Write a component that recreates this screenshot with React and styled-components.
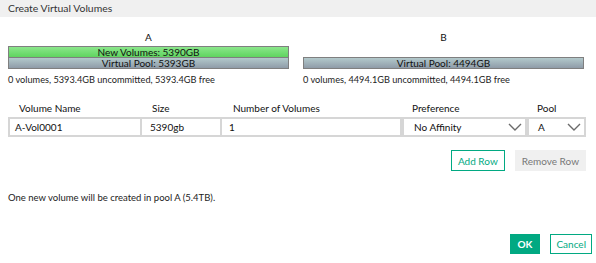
import React from "react";
import styled, { createGlobalStyle } from "styled-components";

const Global = createGlobalStyle`
  html, body { margin: 0; padding: 0; background: #fff; }
  body { font-family: Lato, "Noto Sans", sans-serif; color: #222; }
  * { box-sizing: border-box; }
`;

const Dialog = styled.div`
  width: 596px;
  height: 263px;
  background: #fff;
  display: flex;
  flex-direction: column;
`;

const Header = styled.div`
  height: 17px;
  background: #f0f0f0;
  padding-left: 8px;
  font-size: 10.4px;
  line-height: 17px;
  color: #333;
`;

const Pools = styled.div`
  display: grid;
  grid-template-columns: 281px 281px;
  column-gap: 14px;
  padding-left: 8px;
  margin-top: 13px;
`;

const Pool = styled.div`
  display: flex;
  flex-direction: column;
`;

const PoolLabel = styled.div`
  text-align: center;
  font-size: 10px;
  line-height: 14px;
  color: #111;
`;

const Bars = styled.div`
  margin-top: 2px;
  height: 23px;
  display: flex;
  flex-direction: column;
  justify-content: flex-end;
`;

const Bar = styled.div`
  height: ${(p) => (p.$joined ? "11px" : "12px")};
  border: 1px solid #7f7f7f;
  border-top: ${(p) => (p.$joined ? "none" : "1px solid #7f7f7f")};
  background: ${(p) =>
    p.$kind === "new"
      ? "linear-gradient(#8be68b, #5fd45f)"
      : "linear-gradient(#b2c9cb, #8f9ca8)"};
  font-size: 10px;
  line-height: 10px;
  text-align: center;
  color: #111;
  white-space: nowrap;
  overflow: hidden;
`;

const Stats = styled.div`
  margin-top: 5px;
  font-size: 9.2px;
  line-height: 12px;
  color: #222;
`;

const Grid = styled.div`
  display: grid;
  grid-template-columns: 134px 80px 180px 125px 59px;
  padding-left: 8px;
  margin-top: 15px;
`;

const Th = styled.div`
  font-size: 10px;
  line-height: 14px;
  padding-left: ${(p) => p.$pad || 11}px;
  color: #111;
  margin-bottom: 2px;
`;

const Input = styled.div`
  height: 20px;
  border: 2px solid #d6d6d6;
  border-left-width: ${(p) => (p.$first ? "2px" : "0")};
  font-size: 10px;
  line-height: 16px;
  padding-left: ${(p) => p.$pad || 5}px;
  color: #111;
`;

const Select = styled(Input)`
  display: flex;
  align-items: center;
  justify-content: space-between;
  padding-right: 3px;
  border-left-width: 2px;
`;

const Chevron = () => (
  <svg width="14" height="8" viewBox="0 0 14 8">
    <path d="M1 1 L7 7 L13 1" fill="none" stroke="#6b6b6b" strokeWidth="1.4" />
  </svg>
);

const RowActions = styled.div`
  display: flex;
  justify-content: flex-end;
  gap: 10px;
  padding-right: 10px;
  margin-top: 13px;
`;

const Button = styled.div`
  height: ${(p) => p.$h || 21}px;
  padding: 0 ${(p) => p.$px || 6}px;
  font-size: 10px;
  font-weight: ${(p) => (p.$bold ? 700 : 400)};
  display: flex;
  align-items: center;
  border: 1px solid
    ${(p) => (p.$variant === "ghost" ? "#f0f0f0" : "#01a982")};
  background: ${(p) =>
    p.$variant === "primary"
      ? "#01a982"
      : p.$variant === "ghost"
      ? "#f0f0f0"
      : "#fff"};
  color: ${(p) =>
    p.$variant === "primary"
      ? "#fff"
      : p.$variant === "ghost"
      ? "#777"
      : "#01a982"};
`;

const Message = styled.div`
  margin-top: 20px;
  padding-left: 8px;
  font-size: 9.5px;
  line-height: 14px;
  color: #222;
`;

const Footer = styled.div`
  margin-top: 29px;
  display: flex;
  justify-content: flex-end;
  gap: 10px;
  padding-right: 4px;
`;

export default function App() {
  return (
    <>
      <Global />
      <Dialog>
        <Header>Create Virtual Volumes</Header>
        <Pools>
          <Pool>
            <PoolLabel>A</PoolLabel>
            <Bars>
              <Bar $kind="new">New Volumes: 5390GB</Bar>
              <Bar $kind="pool" $joined>Virtual Pool: 5393GB</Bar>
            </Bars>
            <Stats>0 volumes, 5393.4GB uncommitted, 5393.4GB free</Stats>
          </Pool>
          <Pool>
            <PoolLabel>B</PoolLabel>
            <Bars>
              <Bar $kind="pool">Virtual Pool: 4494GB</Bar>
            </Bars>
            <Stats>0 volumes, 4494.1GB uncommitted, 4494.1GB free</Stats>
          </Pool>
        </Pools>
        <Grid>
          <Th>Volume Name</Th>
          <Th $pad={10}>Size</Th>
          <Th>Number of Volumes</Th>
          <Th $pad={10}>Preference</Th>
          <Th $pad={10}>Pool</Th>
          <Input $first>A-Vol0001</Input>
          <Input $pad={8}>5390gb</Input>
          <Input $pad={7}>1</Input>
          <Select $pad={10}>
            No Affinity
            <Chevron />
          </Select>
          <Select $pad={9}>
            A
            <Chevron />
          </Select>
        </Grid>
        <RowActions>
          <Button $px={6}>Add Row</Button>
          <Button $variant="ghost" $px={6}>Remove Row</Button>
        </RowActions>
        <Message>One new volume will be created in pool A (5.4TB).</Message>
        <Footer>
          <Button $variant="primary" $bold $h={20} $px={7}>OK</Button>
          <Button $h={20} $px={5}>Cancel</Button>
        </Footer>
      </Dialog>
    </>
  );
}
